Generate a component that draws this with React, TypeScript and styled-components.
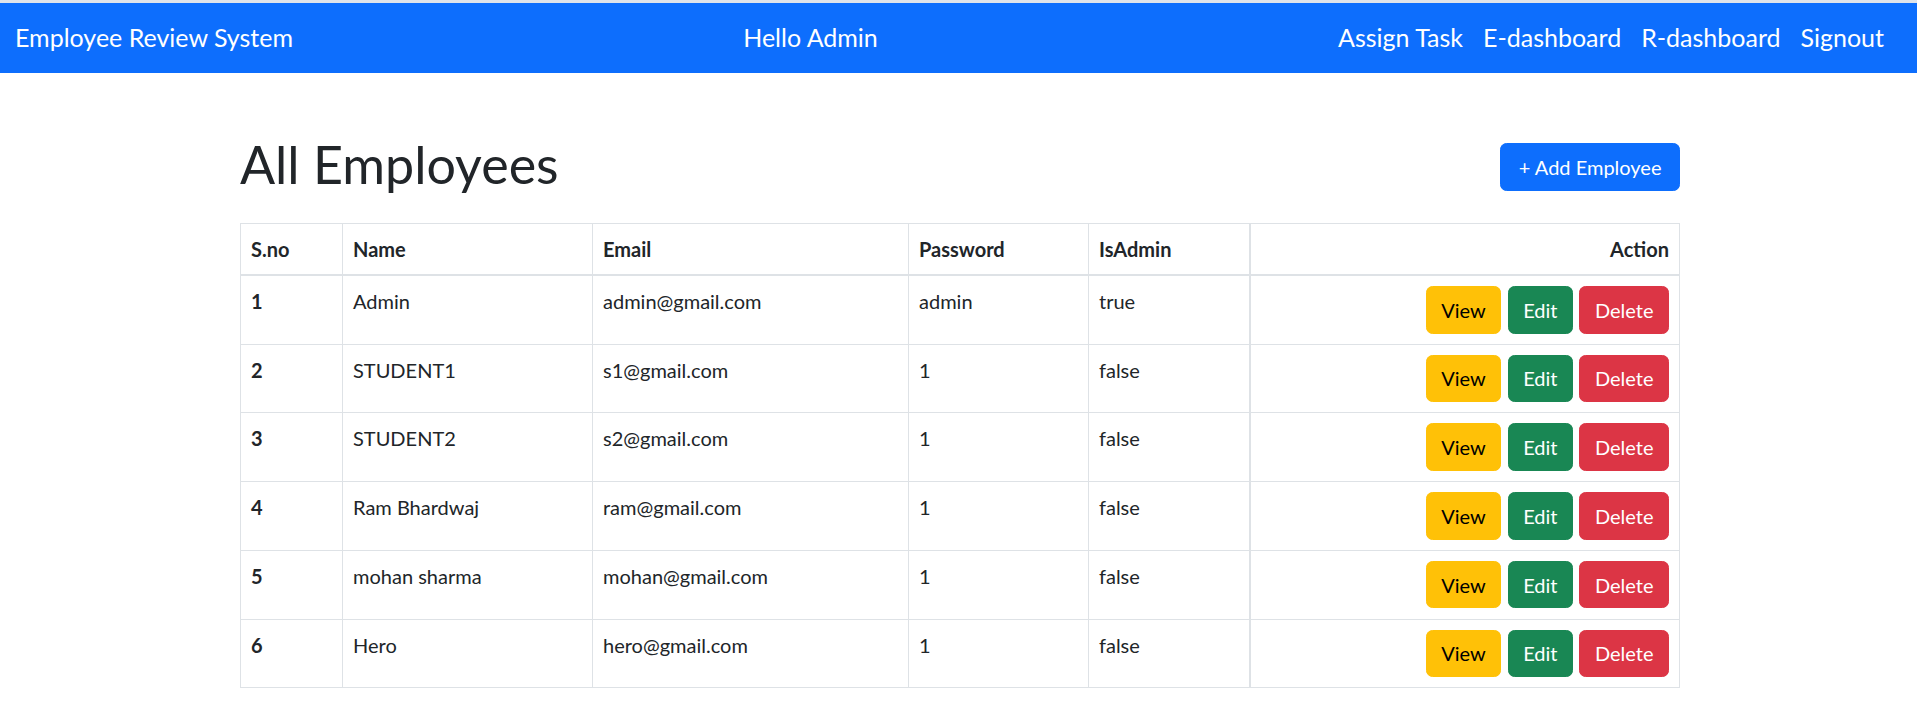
import React from "react";
import styled, { createGlobalStyle } from "styled-components";

const GlobalStyle = createGlobalStyle`
  html, body {
    margin: 0;
    padding: 0;
    background: #ffffff;
  }
  body {
    font-family: Lato, "Open Sans", "Liberation Sans", sans-serif;
    color: #212529;
    font-size: 20px;
    line-height: 1.5;
  }
  * { box-sizing: border-box; }
`;

const Page = styled.div`
  border-top: 3px solid #dfe4ea;
  min-height: 719px;
`;

const NavBar = styled.nav`
  display: flex;
  align-items: center;
  height: 70px;
  padding: 10px 15px;
  background: #0d6efd;
  color: #ffffff;
`;

const Brand = styled.a`
  font-size: 25px;
  line-height: 37.5px;
  padding: 6.25px 0;
  margin-right: 20px;
  color: #ffffff;
  text-decoration: none;
  white-space: nowrap;
`;

const Spacer = styled.div`
  flex: 1;
`;

const NavText = styled.span`
  font-size: 25px;
  line-height: 37.5px;
  padding: 0 10px;
  margin-right: 20px;
  white-space: nowrap;
`;

const NavLinks = styled.ul`
  display: flex;
  list-style: none;
  margin: 0 8px 0 0;
  padding: 0;
`;

const NavLink = styled.a`
  display: block;
  font-size: 25px;
  line-height: 37.5px;
  padding: 0 10px;
  color: #ffffff;
  text-decoration: none;
  white-space: nowrap;
`;

const Main = styled.main`
  width: 1440px;
  margin: 0 0 0 240px;
  padding-top: 61px;
`;

const HeaderRow = styled.div`
  display: flex;
  justify-content: space-between;
  align-items: center;
  margin-bottom: 29px;
`;

const Title = styled.h1`
  margin: 0;
  font-size: 52px;
  line-height: 60px;
  font-weight: 400;
  color: #212529;
`;

type Variant = "primary" | "warning" | "success" | "danger";

const palette: Record<Variant, { bg: string; fg: string }> = {
  primary: { bg: "#0d6efd", fg: "#ffffff" },
  warning: { bg: "#ffc107", fg: "#000000" },
  success: { bg: "#198754", fg: "#ffffff" },
  danger: { bg: "#dc3545", fg: "#ffffff" },
};

const Button = styled.button<{ $variant: Variant }>`
  display: inline-flex;
  align-items: center;
  justify-content: center;
  height: 47.5px;
  padding: 0 14.5px;
  border: 1px solid ${(p) => palette[p.$variant].bg};
  border-radius: 6.5px;
  background: ${(p) => palette[p.$variant].bg};
  color: ${(p) => palette[p.$variant].fg};
  font-family: inherit;
  font-size: 20px;
  line-height: 30px;
  cursor: pointer;
  white-space: nowrap;
`;

const AddButton = styled(Button)`
  height: 48px;
  padding: 0 17.5px;
  margin-top: 6px;
`;

const Table = styled.table`
  width: 100%;
  border-collapse: collapse;
  table-layout: fixed;
`;

const HeadCell = styled.th<{ $right?: boolean; $thickLeft?: boolean }>`
  border: 1px solid #dee2e6;
  border-bottom: 2px solid #dee2e6;
  ${(p) => (p.$thickLeft ? "border-left: 2px solid #dee2e6;" : "")}
  padding: 10px;
  font-size: 20px;
  line-height: 30px;
  font-weight: 700;
  text-align: ${(p) => (p.$right ? "right" : "left")};
  vertical-align: top;
  color: #212529;
`;

const Row = styled.tr<{ $thickBottom?: boolean }>`
  ${(p) => (p.$thickBottom ? "& > * { border-bottom: 2px solid #dee2e6; }" : "")}
`;

const Cell = styled.td<{ $bold?: boolean; $thickLeft?: boolean }>`
  border: 1px solid #dee2e6;
  ${(p) => (p.$thickLeft ? "border-left: 2px solid #dee2e6;" : "")}
  padding: 10px;
  font-size: 20px;
  line-height: 30px;
  font-weight: ${(p) => (p.$bold ? 700 : 400)};
  vertical-align: top;
  color: #212529;
  height: 68.75px;
`;

const Actions = styled.div`
  display: flex;
  justify-content: flex-end;
  gap: 6.5px;
`;

const employees = [
  { id: 1, name: "Admin", email: "admin@gmail.com", password: "admin", isAdmin: "true" },
  { id: 2, name: "STUDENT1", email: "s1@gmail.com", password: "1", isAdmin: "false" },
  { id: 3, name: "STUDENT2", email: "s2@gmail.com", password: "1", isAdmin: "false" },
  { id: 4, name: "Ram Bhardwaj", email: "ram@gmail.com", password: "1", isAdmin: "false" },
  { id: 5, name: "mohan sharma", email: "mohan@gmail.com", password: "1", isAdmin: "false" },
  { id: 6, name: "Hero", email: "hero@gmail.com", password: "1", isAdmin: "false" },
];

export default function App() {
  return (
    <Page>
      <GlobalStyle />
      <NavBar>
        <Brand href="#">Employee Review System</Brand>
        <Spacer />
        <NavText>Hello Admin</NavText>
        <Spacer />
        <NavLinks>
          <li><NavLink href="#">Assign Task</NavLink></li>
          <li><NavLink href="#">E-dashboard</NavLink></li>
          <li><NavLink href="#">R-dashboard</NavLink></li>
          <li><NavLink href="#">Signout</NavLink></li>
        </NavLinks>
      </NavBar>
      <Main>
        <HeaderRow>
          <Title>All Employees</Title>
          <AddButton $variant="primary">+ Add Employee</AddButton>
        </HeaderRow>
        <Table>
          <colgroup>
            <col style={{ width: 102 }} />
            <col style={{ width: 250 }} />
            <col style={{ width: 316 }} />
            <col style={{ width: 180 }} />
            <col style={{ width: 161 }} />
            <col />
          </colgroup>
          <thead>
            <tr>
              <HeadCell>S.no</HeadCell>
              <HeadCell>Name</HeadCell>
              <HeadCell>Email</HeadCell>
              <HeadCell>Password</HeadCell>
              <HeadCell>IsAdmin</HeadCell>
              <HeadCell $right $thickLeft>Action</HeadCell>
            </tr>
          </thead>
          <tbody>
            {employees.map((e) => (
              <Row key={e.id} $thickBottom={e.id === 4}>
                <Cell $bold>{e.id}</Cell>
                <Cell>{e.name}</Cell>
                <Cell>{e.email}</Cell>
                <Cell>{e.password}</Cell>
                <Cell>{e.isAdmin}</Cell>
                <Cell $thickLeft>
                  <Actions>
                    <Button $variant="warning">View</Button>
                    <Button $variant="success">Edit</Button>
                    <Button $variant="danger">Delete</Button>
                  </Actions>
                </Cell>
              </Row>
            ))}
          </tbody>
        </Table>
      </Main>
    </Page>
  );
}
